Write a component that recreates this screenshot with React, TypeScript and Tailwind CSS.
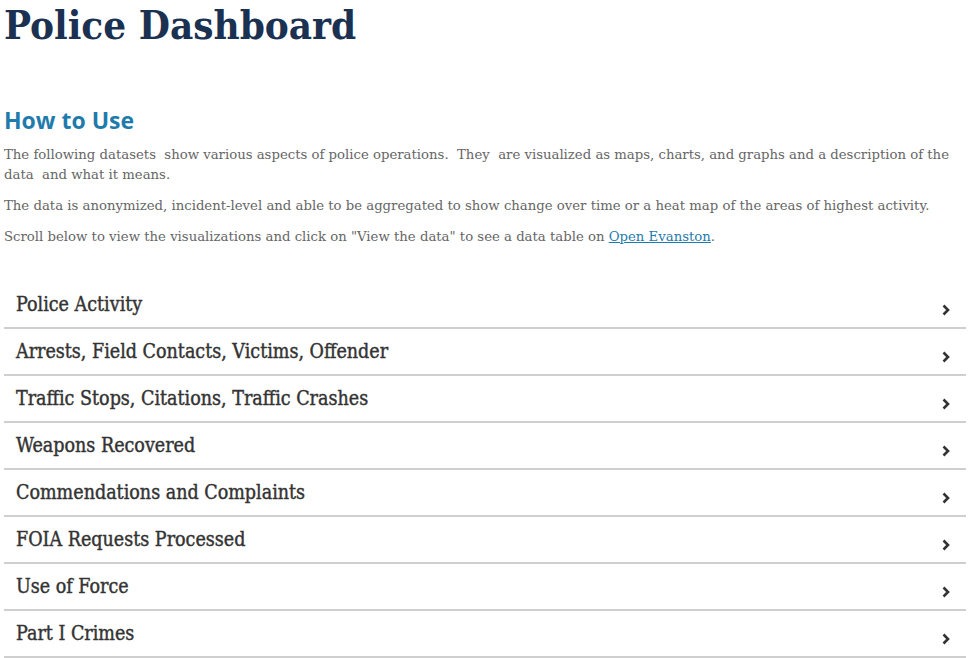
const sections = [
  'Police Activity',
  'Arrests, Field Contacts, Victims, Offender',
  'Traffic Stops, Citations, Traffic Crashes',
  'Weapons Recovered',
  'Commendations and Complaints',
  'FOIA Requests Processed',
  'Use of Force',
  'Part I Crimes',
];

function Chevron() {
  return (
    <svg width="10" height="12" viewBox="0 0 10 12" className="mt-[10px]">
      <polyline points="2.5,1.5 7,6 2.5,10.5" fill="none" stroke="#333" strokeWidth="2.6" />
    </svg>
  );
}

export default function App() {
  return (
    <div className="min-h-screen bg-white px-1 font-['DejaVu_Serif',serif]">
      <h1 className="font-['DejaVu_Serif_Condensed',serif] text-[40px] font-bold leading-[50px] text-[#1b3152]">
        Police Dashboard
      </h1>

      <h2 className="mt-[55px] font-['Open_Sans',sans-serif] text-[23px] font-bold leading-[30px] text-[#1f7bab]">
        How to Use
      </h2>
      <div className="text-[13.25px] leading-[20px] text-[#666]">
        <p className="mt-[10px]">
          The following datasets&nbsp; show various aspects of police operations.&nbsp; They&nbsp; are visualized as maps, charts, and graphs and a description of the data&nbsp; and what it means.
        </p>
        <p className="mt-[11px]">
          The data is anonymized, incident-level and able to be aggregated to show change over time or a heat map of the areas of highest activity.
        </p>
        <p className="mt-[11px]">
          Scroll below to view the visualizations and click on "View the data" to see a data table on{' '}
          <a href="#" className="text-[#1f7bab] underline">Open Evanston</a>.
        </p>
      </div>

      <ul className="mt-[35px]">
        {sections.map((s) => (
          <li key={s} className="flex h-[47px] items-center justify-between border-b-2 border-[#cfcfcf] pl-3 pr-[15px]">
            <span className="font-['DejaVu_Serif_Condensed',serif] text-[19.5px] text-[#333] [-webkit-text-stroke:0.4px_#333]">
              {s}
            </span>
            <Chevron />
          </li>
        ))}
      </ul>
    </div>
  );
}
